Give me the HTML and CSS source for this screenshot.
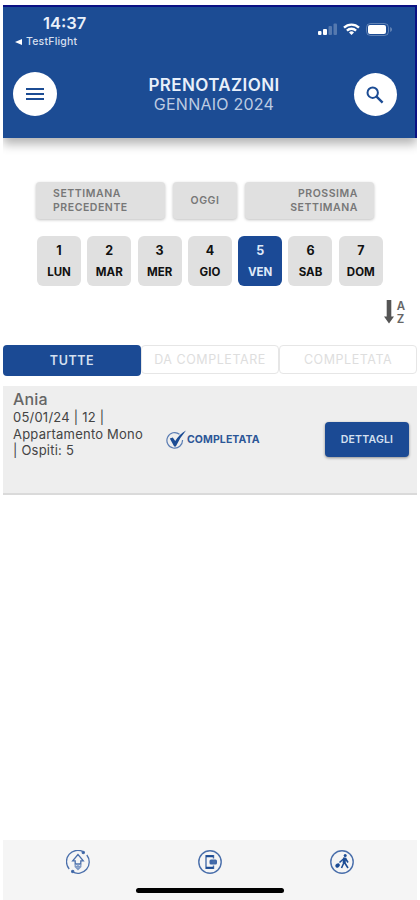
FILE: index.html
```html
<!DOCTYPE html>
<html lang="it">
  <head>
    <meta charset="UTF-8" />
    <meta name="viewport" content="width=device-width, initial-scale=1.0" />
    <title>Prenotazioni</title>
    <link rel="stylesheet" href="styles.css">
  </head>
  <body>
    <header>
      <div class="status">
        <div class="clock">
          <p class="time">14:37</p>
          <p class="back"><span class="back-arrow"></span>TestFlight</p>
        </div>
        <div class="signals">
          <svg width="19" height="12" viewBox="0 0 19 12" fill="#fff">
            <rect x="0" y="8" width="3.5" height="4" rx="1" />
            <rect x="5" y="6" width="4" height="6" rx="1" />
            <rect x="10.5" y="3" width="3.5" height="9" rx="1" opacity="0.25" />
            <rect x="15.5" y="0.5" width="3.5" height="11.5" rx="1" opacity="0.25" />
          </svg>
          <svg width="17" height="12" viewBox="0 0 17 12" fill="none" stroke="#fff" stroke-width="2.3">
            <path d="M1 4.6a10.800 10.800 0 0 1 15 0" />
            <path d="M3.900 7.600a6.700 6.700 0 0 1 9.200 0" />
            <path d="M8.500 12L6 9.500a3.700 3.700 0 0 1 5 0z" fill="#fff" stroke="none" />
          </svg>
          <svg width="27" height="13" viewBox="0 0 27 13">
            <rect x="0.5" y="0.5" width="22" height="12" rx="4" fill="none" stroke="#fff" opacity="0.3" />
            <rect x="2" y="2" width="18" height="9" rx="2" fill="#fff" />
            <path d="M24.300 4v5c2-.8 2-4.200 0-5z" fill="#fff" opacity="0.4" />
          </svg>
        </div>
      </div>
      <nav>
        <button type="button" class="round">
          <svg width="18" height="14" viewBox="0 0 18 14" stroke="#1c4c94" stroke-width="2">
            <path d="M0 2h18M0 7h18M0 12h18" />
          </svg>
        </button>
        <div class="heading">
          <h1>PRENOTAZIONI</h1>
          <p>GENNAIO 2024</p>
        </div>
        <button type="button" class="round search">
          <svg width="18" height="18" viewBox="0 0 18 18" fill="none" stroke="#1c4c94" stroke-width="2">
            <circle cx="6.7" cy="6.7" r="5.2" />
            <path d="M10.600 10.600l6 6" stroke-width="2.4" />
          </svg>
        </button>
      </nav>
    </header>
    <main>
      <div class="weeks">
        <button type="button" class="prev">SETTIMANA<br />PRECEDENTE</button>
        <button type="button" class="today">OGGI</button>
        <button type="button" class="next">PROSSIMA<br />SETTIMANA</button>
      </div>
      <ul class="days">
        <li><span>1</span>LUN</li>
        <li><span>2</span>MAR</li>
        <li><span>3</span>MER</li>
        <li><span>4</span>GIO</li>
        <li class="active"><span>5</span>VEN</li>
        <li><span>6</span>SAB</li>
        <li><span>7</span>DOM</li>
      </ul>
      <div class="sort">
        <svg width="10" height="24" viewBox="0 0 10 24" fill="#555">
          <path d="M2.700 0h4.600v16.500H10L5 23.500 0 16.500h2.700z" />
        </svg>
        <p>A<br />Z</p>
      </div>
      <div class="tabs">
        <button type="button" class="active">TUTTE</button>
        <button type="button">DA COMPLETARE</button>
        <button type="button">COMPLETATA</button>
      </div>
      <section class="booking">
        <div class="info">
          <h2>Ania</h2>
          <p>05/01/24 | 12 |<br />Appartamento Mono<br />| Ospiti: 5</p>
        </div>
        <p class="state">
          <svg width="21" height="20" viewBox="0 0 21 20" fill="none" stroke="#1c4c94">
            <path d="M13.500 4.200A7.800 7.800 0 1 0 16.500 10" stroke="#5b7db3" stroke-width="1.2" />
            <path d="M3.800 8.600l3-1.100 2.400 3.600Q13.500 4 20 .500 13.500 8 9.800 16.500H8.200z" fill="#1c4c94" stroke="none" />
          </svg>
          COMPLETATA
        </p>
        <button type="button" class="details">DETTAGLI</button>
      </section>
    </main>
    <footer>
      <div class="links">
        <svg width="24" height="24" viewBox="0 0 24 24" fill="none" stroke="#4a6fab" stroke-width="1.3">
          <path d="M17.500 1.900A11.300 11.300 0 0 0 3.200 19M6.500 21.900A11.300 11.300 0 0 0 20.800 5" />
          <circle cx="17.3" cy="2.6" r="1.1" fill="#1c4c94" />
          <circle cx="6.7" cy="21.4" r="1.1" fill="#1c4c94" />
          <path d="M12 4.500l-5.300 6.300h2.500V14h5.600v-3.200h2.500z" />
          <path d="M9.200 14.500v2.200L12 19.500l2.800-2.800v-2.200M9.500 16.500h5M12 13v6" stroke="#7f9ac5" />
        </svg>
        <svg width="24" height="24" viewBox="0 0 24 24" fill="none" stroke="#4a6fab" stroke-width="1.4">
          <circle cx="12" cy="12" r="11.2" />
          <path d="M15.500 8.500V5.700h-7.500v12.600h7.500v-2.800" />
          <path d="M8 6.200h7.500M8 17.800h7.500" stroke="#1c4c94" stroke-width="2" />
          <rect x="11.5" y="9.5" width="7.5" height="5" rx="1.5" fill="#3e66a7" stroke="none" />
          <circle cx="16" cy="12" r="1" fill="#1c4c94" />
        </svg>
        <svg width="24" height="24" viewBox="0 0 24 24" fill="none" stroke="#1c4c94" stroke-width="1.6">
          <circle cx="12" cy="12" r="11.2" stroke="#4a6fab" stroke-width="1.4" />
          <circle cx="15.2" cy="5.5" r="1.5" fill="#1c4c94" stroke="none" />
          <path d="M14.800 7.500l-.8 5.500" stroke-width="3" />
          <path d="M14 12.500l-2.500 5.500M14.500 12.500l3.500 5.500M14 8.500l-4.500 4M15.500 8.500l2.500 4" />
          <ellipse cx="7.6" cy="15.5" rx="2.4" ry="1.9" transform="rotate(-30 7.6 15.5)" fill="#1c4c94" stroke="none" />
        </svg>
      </div>
      <div class="home-bar"></div>
    </footer>
  </body>
</html>
```

FILE: styles.css
```css
* {
  margin: 0;
  padding: 0;
  box-sizing: border-box;
  font-family: "Inter", "Liberation Sans", sans-serif;
}

body {
  height: 900px;
  padding: 5px 3px 0;
  display: flex;
  flex-direction: column;
  background-color: #fff;
  overflow: hidden;
}

svg {
  display: block;
  flex: none;
}

button {
  border: none;
  cursor: pointer;
}

header {
  height: 133px;
  background-color: #1c4c94;
  border-top: 2px solid #0b1284;
  border-right: 2px solid #0b1284;
  box-shadow: 0 6px 10px rgba(0, 0, 0, 0.3);
  clip-path: inset(0 0 -20px 0);
  color: #fff;
}

.status {
  height: 65px;
  padding: 7px 22px 0 12px;
  display: flex;
  justify-content: space-between;
}

.time {
  font-size: 16.5px;
  font-weight: 600;
  line-height: 19px;
  padding-left: 28px;
  color: #e9f0fa;
}

.back {
  display: flex;
  align-items: center;
  gap: 4px;
  font-size: 10.5px;
  font-weight: 500;
  line-height: 18px;
  letter-spacing: 0.2px;
  color: #d5dfee;
}

.back-arrow {
  border: 3.5px solid transparent;
  border-right: 7px solid #fff;
  border-left: none;
}

.signals {
  display: flex;
  gap: 6px;
  padding-top: 9px;
}

nav {
  display: flex;
  justify-content: space-between;
  padding: 0 18px 0 10px;
}

.round {
  width: 44px;
  height: 44px;
  border-radius: 50%;
  background-color: #fff;
  display: flex;
  align-items: center;
  justify-content: center;
}

.search {
  width: 43px;
  height: 43px;
  margin-top: 1px;
}

.heading {
  text-align: center;
  padding: 3px 0 0 17px;
}

h1 {
  font-size: 17px;
  font-weight: 600;
  line-height: 20px;
  letter-spacing: 0.4px;
  color: #e9f0fa;
}

.heading p {
  font-size: 16px;
  line-height: 19px;
  letter-spacing: 0.25px;
  color: #bccbe2;
}

.weeks {
  display: flex;
  gap: 8px;
  padding: 44px 43px 0 33px;
}

.weeks button {
  height: 37px;
  border-radius: 4px;
  background-color: #e0e0e0;
  box-shadow: 0 1px 3px rgba(0, 0, 0, 0.25);
  font-size: 10.5px;
  font-weight: 600;
  line-height: 13.5px;
  letter-spacing: 0.55px;
  color: #777;
}

.weeks .prev {
  width: 129px;
  padding-left: 17px;
  text-align: left;
}

.weeks .today {
  width: 64px;
}

.weeks .next {
  width: 129px;
  padding-right: 16px;
  text-align: right;
}

.days {
  list-style: none;
  display: flex;
  gap: 6.3px;
  padding: 17px 0 0 34px;
}

.days li {
  width: 44px;
  height: 50px;
  padding-top: 5px;
  border-radius: 6px;
  background-color: #e0e0e0;
  text-align: center;
  font-size: 11.5px;
  font-weight: 700;
  line-height: 20.5px;
  color: #111;
}

.days span {
  display: block;
  font-size: 12.5px;
}

.days .active {
  background-color: #1b4a96;
  color: #dfe9f8;
}

.sort {
  display: flex;
  gap: 3px;
  justify-content: flex-end;
  padding: 14px 12px 0 0;
}

.sort p {
  font-size: 11.5px;
  font-weight: 600;
  line-height: 13px;
  color: #666;
}

.tabs {
  display: flex;
  align-items: flex-start;
  height: 31px;
  margin-top: 19px;
}

.tabs button {
  width: 138px;
  height: 29px;
  border: 1px solid #e6e6e6;
  border-radius: 4px;
  background-color: #fff;
  font-size: 12.5px;
  letter-spacing: 0.55px;
  color: #dedede;
}

.tabs .active {
  height: 31px;
  border: none;
  background-color: #1b4a94;
  font-weight: 600;
  color: #d5e0f0;
}

.booking {
  display: flex;
  height: 109px;
  margin-top: 10px;
  padding: 0 8px 0 10px;
  background-color: #eee;
  border-bottom: 2px solid #dadada;
}

.info {
  width: 153px;
  padding-top: 4px;
}

h2 {
  font-size: 16px;
  font-weight: 500;
  line-height: 19px;
  letter-spacing: 0.2px;
  color: #666;
}

.info p {
  font-size: 13px;
  line-height: 16.5px;
  letter-spacing: 0.22px;
  color: #444;
}

.state {
  display: flex;
  align-items: center;
  align-self: center;
  font-size: 10.5px;
  font-weight: 700;
  letter-spacing: 0.1px;
  color: #2c5697;
}

.details {
  width: 84px;
  height: 35px;
  margin-left: auto;
  align-self: center;
  border-radius: 4px;
  background-color: #1b4a94;
  box-shadow: 0 1px 3px rgba(0, 0, 0, 0.4);
  font-size: 10.5px;
  font-weight: 600;
  letter-spacing: 0.2px;
  color: #d5e0f0;
}

footer {
  height: 60px;
  margin-top: auto;
  padding-top: 10px;
  background-color: #f5f5f5;
}

.links {
  display: flex;
  justify-content: space-between;
  padding: 0 63px;
}

.home-bar {
  width: 148px;
  height: 5px;
  margin: 14px auto 0;
  border-radius: 3px;
  background-color: #000;
}
```
